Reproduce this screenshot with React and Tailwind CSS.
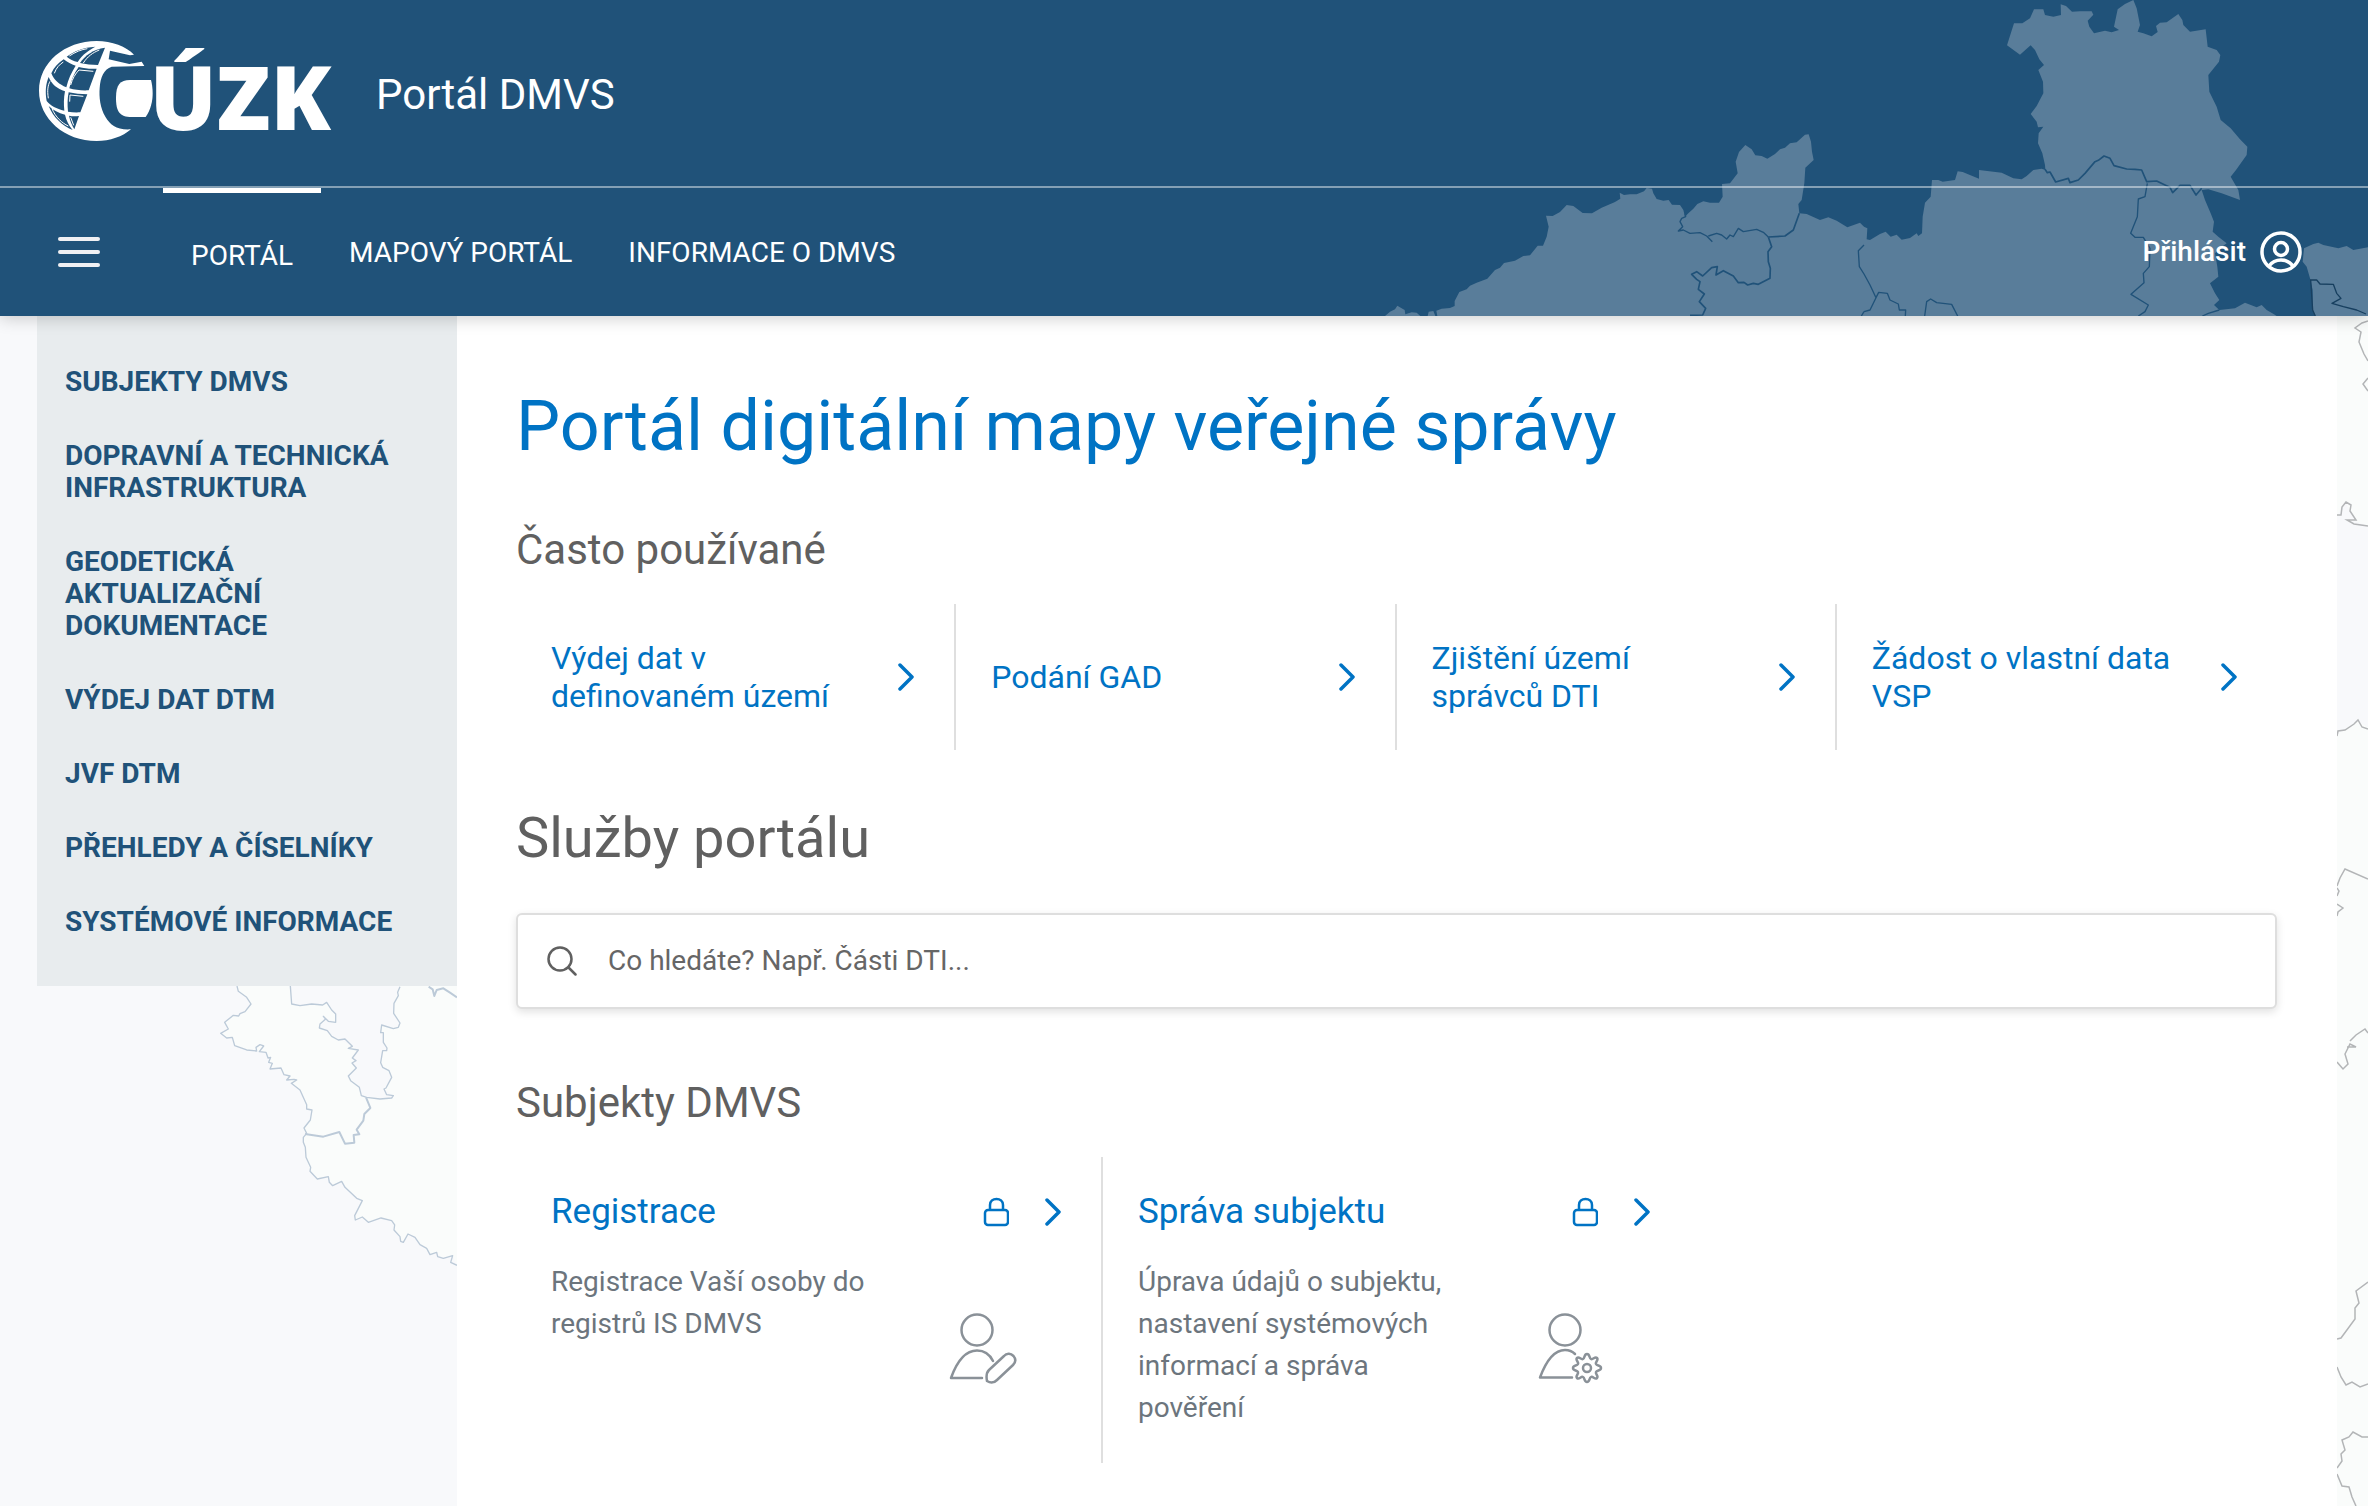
import React, { useState } from 'react';

const MENU = [
  'Subjekty DMVS',
  'Dopravní a technická infrastruktura',
  'Geodetická aktualizační dokumentace',
  'Výdej dat DTM',
  'JVF DTM',
  'Přehledy a číselníky',
  'Systémové informace',
];

const CASTO_POUZIVANE = [
  'Výdej dat v definovaném území',
  'Podání GAD',
  'Zjištění území správců DTI',
  'Žádost o vlastní data VSP',
];

const SLUZBY = [
  { nazev: 'Registrace', popis: 'Registrace Vaší osoby do registrů IS DMVS', Ikona: IkonaOsobaTuzka },
  {
    nazev: 'Správa subjektu',
    popis: 'Úprava údajů o subjektu, nastavení systémových informací a správa pověření',
    Ikona: IkonaOsobaKolecko,
  },
];

function Logo() {
  return (
    <svg viewBox="0 0 930 360" className="w-[310px] h-[120px] shrink-0 overflow-visible" role="img" aria-label="ČÚZK">
      <g fill="#fff">
        <path d="M312 74C290 50 245 33 200 33C104 33 27 98 27 182C27 266 104 333 200 333C240 333 278 320 303 298C262 301 240 285 227 262C210 235 207 200 209 175C211 140 222 118 245 110L343 108L335 95L298 102L236 88L240 62L300 76Z" />
        <path d="M363 150H300C270 150 258 165 258 203C258 243 268 261 305 261H347C362 240 368 215 368 190C368 175 366 162 363 150Z" />
      </g>
      {/* pole zeměkoule mezi poledníky */}
      <g fill="#205279">
        <path d="M110 80C133 63 160 52 196 50C178 60 158 72 143 96C130 93 119 87 110 80Z" />
        <path d="M150 99C165 76 190 58 225 53L204 105C185 105 167 103 150 99Z" />
        <path d="M101 88C112 97 124 103 137 107C124 128 115 147 109 172C88 164 72 150 64 130C72 112 84 99 101 88Z" />
        <path d="M146 111C164 116 181 117 200 116L176 181C155 182 135 180 118 175C123 152 132 131 146 111Z" />
        <path d="M56 141C64 162 82 177 105 184C101 205 101 223 103 242C79 236 62 228 50 213C45 186 47 162 56 141Z" />
        <path d="M116 187C133 191 152 193 172 193L151 247C137 248 125 247 114 245C112 224 112 207 116 187Z" />
        <path d="M56 228C70 241 85 249 105 254C109 271 116 286 128 300C96 287 70 262 56 228Z" />
        <path d="M117 257C126 259 136 259 147 258L133 298C126 286 120 272 117 257Z" />
      </g>
      <g fill="none" stroke="#fff" strokeWidth="3">
        <path d="M118 78C136 66 155 58 172 56M160 99C172 80 188 68 208 60M73 130C79 113 88 104 100 96M122 165C127 146 136 131 147 120L190 124M55 205C51 180 54 165 60 154M119 215L120 195L160 199M66 236C77 262 96 279 115 288M122 262L131 286" />
      </g>
      <text x="359" y="299" fill="#fff" fontFamily="Open Sans, sans-serif" fontWeight="800" fontSize="265">
        ÚZK
      </text>
    </svg>
  );
}

function MapaHlavicka() {
  return (
    <svg viewBox="0 0 3024 948" className="absolute top-0 right-0 w-[1008px] h-[316px]" aria-hidden="true">
      <g fill="#597d9a">
        <path d="M75 948L90 935L105 928L112 917L134 930L136 943L155 937L170 938L181 948ZM203 948L206 935L220 933L226 948Z" />
        <path d="M232 948L229 932L245 926L270 924L284 918L284 903L298 876L320 868L330 857L350 848L382 836L405 810L420 803L432 789L465 782L490 768L510 766L533 737L549 737L560 710L566 680L558 647L578 648L600 636L620 615L640 618L668 639L696 640L725 623L765 606L781 596L779 578L792 585L810 583L830 583L852 574L860 564L876 566L880 580L890 597L910 602L926 600L936 614L960 615L970 630L975 650L985 640L1000 626L1012 612L1030 604L1050 608L1077 608L1088 590L1086 552L1110 550L1133 520L1127 485L1137 456L1156 435L1175 448L1186 466L1205 468L1222 476L1245 462L1260 448L1275 443L1290 430L1310 427L1335 404L1346 403L1353 425L1356 455L1361 480L1336 503L1333 550L1325 600L1315 612L1318 640L1340 642L1380 660L1405 652L1430 662L1462 682L1500 668L1512 680L1522 685L1520 718L1530 720L1560 702L1577 695L1592 710L1610 704L1625 719L1650 714L1670 700L1675 708L1686 700L1688 650L1695 608L1712 590L1716 540L1735 540L1748 545L1785 540L1793 514L1808 516L1857 536L1857 510L1925 518L1960 535L1985 538L2000 528L2020 510L2045 506L2056 510L2055 495L2047 460L2034 430L2036 400L2050 380L2034 382L2030 365L2012 342L2030 318L2050 280L2049 245L2035 210L2052 195L2038 178L2025 150L2012 136L2000 146L1980 164L1941 136L1962 70L1987 70L2010 55L2022 28L2050 28L2055 45L2080 50L2103 45L2102 13L2118 18L2136 35L2160 34L2195 34L2200 44L2183 62L2188 80L2202 100L2235 92L2255 97L2277 90L2262 80L2273 28L2295 12L2320 0L2330 25L2340 75L2333 95L2350 100L2375 109L2393 96L2388 78L2400 68L2420 67L2455 42L2467 60L2470 75L2490 95L2537 88L2543 140L2570 150L2581 165L2577 185L2545 225L2548 275L2570 320L2582 360L2612 385L2640 418L2662 440L2660 465L2628 510L2612 530L2635 570L2640 600L2585 580L2545 568L2525 570L2535 600L2552 640L2562 665L2558 695L2575 710L2600 730L2580 745L2565 760L2572 800L2575 830L2550 850L2565 880L2578 900L2562 915L2578 930L2625 925L2655 908L2690 922L2705 915L2720 930L2742 943L2750 948Z" />
        <path d="M2832 745L2860 732L2875 728L2890 735L2935 745L2960 738L2980 750L3024 742V948H2866L2858 930L2858 870L2850 835L2840 800L2828 785Z" />
      </g>
      <g fill="none" stroke="#205279" strokeWidth="4" strokeLinejoin="round">
        <path d="M975 640L977 650L965 655L960 665L968 680L955 693L970 690L990 700L1020 698L1040 708L1057 725M1045 708L1070 700L1085 705L1100 717L1110 705L1120 710L1135 685L1150 695L1190 688L1210 697L1225 711" />
        <path d="M1225 711L1275 708L1300 690L1318 640M1225 711L1235 740L1224 755L1225 785L1231 805L1230 835L1195 853L1180 850L1163 855L1152 847L1135 848L1120 828L1090 812L1068 825L1072 800L1055 803L1028 828L1010 815L995 823L1010 838L1020 845L1015 868L1033 882L1018 905L1037 925L1028 945L990 946" strokeWidth="5" />
        <path d="M1512 735L1495 752L1498 800L1512 822L1530 855L1548 893L1530 930L1512 935M1548 893L1556 877L1582 880L1590 900L1615 912L1618 930L1637 930L1636 948M1504 948L1512 935" />
        <path d="M1694 948L1700 905L1712 897L1730 908L1775 913L1793 948" />
        <path d="M2055 508L2062 518L2070 516L2087 546L2125 535L2130 548L2155 540L2175 520L2205 485L2215 481L2232 468L2250 475L2262 497L2300 507L2325 508L2345 510L2360 545L2390 543L2415 555L2430 562L2438 578L2460 556L2490 556L2508 585L2525 565" strokeWidth="5" />
        <path d="M2362 550L2355 590L2335 597L2332 650L2312 700L2325 712L2350 712L2370 745L2368 800L2350 820L2352 848L2313 883L2365 915L2355 935L2335 948M2527 948L2545 940L2578 930" />
        <path d="M2850 840L2870 840L2880 852L2920 853L2930 880L2943 895L2916 910L2950 920L2990 930L3018 942M2852 840L2858 930L2866 948" stroke="#173f5f" />
      </g>
    </svg>
  );
}

function MapaVlevo() {
  return (
    <svg viewBox="-459 46 1260 884" className="block w-full" aria-hidden="true">
      <path
        fill="#fafcfb"
        fillRule="evenodd"
        d="M141 46L145 62L170 80L183 100L150 133L130 134L104 155L115 175L92 188L110 202L127 200L134 225L170 238L228 245L240 262L240 295L273 292L282 312L305 335L330 358L350 415L366 418L361 448L342 472L345 490L340 510L348 560L360 602L382 625L415 618L428 645L455 632L465 650L517 690L494 748L517 739L535 755L573 742L610 753L612 778L640 815L654 790L675 800L690 822L720 852L740 848L760 863L788 855L801 884V46ZM301 46L305 100L330 105L400 100L410 95L437 130V155L402 140L388 170L430 197L487 227L505 238L487 262L497 292L475 316L508 350L514 375L570 382L605 382L610 375L582 355L605 320L572 276L578 240L590 235L575 186V163L615 175L630 157L611 128L612 98L628 46Z"
      />
      <g fill="none" stroke="#bccad8" strokeWidth="4" strokeLinejoin="round">
        <path d="M141 46L145 62L170 80L183 100L165 123L150 129L146 136L130 134L104 155L115 175L92 188L110 202L127 200L134 225L170 238L200 241L198 230L210 222L221 226L208 243L228 245L234 262L242 260L236 275L247 278L240 295L273 292L282 312L300 316L290 328L312 326L320 328L304 338L330 358L350 402V415L366 418L361 448L342 472L350 488L340 500V515L346 530L348 560L362 590L360 602L382 625L415 618L418 635L428 645L455 632L465 650L500 683L517 690L494 735L496 748L517 739L535 755L573 742L605 750L614 763L612 778L630 798L632 812L640 815L654 790L675 800L690 822L710 833L720 852L740 845L743 858L760 863L788 855L782 875L801 884" />
        <path d="M301 46L305 100L330 105L365 100L398 103L410 95L425 118L437 130V155L415 152L400 137L407 145L390 160L388 172L412 180L425 197L445 208L465 205L487 227L475 233L505 238L487 262L498 270L486 277L499 292L475 316L482 330L508 350L514 375L530 380L570 385L605 382L610 375L590 372L582 355L588 352L605 320L597 300L578 290L572 276L578 240H590L591 232L580 215V186H572L575 163L610 174L625 170L630 157L611 128L612 98L625 75L623 65L630 48" />
        <path d="M345 490L400 498L448 484L465 519L493 516L491 493L508 491L500 477L520 450L523 430L541 412L528 380" strokeWidth="6" />
        <path d="M716 48L728 56L733 76L740 58L760 53L780 66L801 80" strokeWidth="6" />
      </g>
    </svg>
  );
}

function MapaVpravo() {
  return (
    <svg viewBox="0 0 31 1190" className="block w-full" aria-hidden="true">
      <path fill="#fafcfb" d="M0 0H31V1190H0Z" />
      <path fill="#f8f9fb" d="M0 200L8 186L18 205L31 210V411L20 405L0 418Z" />
      <g fill="none" stroke="#b3b5b7" strokeWidth="1.500">
        <path d="M31 5L25 7L18 12L24 16L22 26L27 38L31 45M31 62L26 68L31 75" />
        <path d="M0 199L4 199L5 191L9 186L14 189L13 195L19 204L10 204L17 208L31 210" />
        <path d="M0 420L1 415L8 414L17 408L21 404L25 411L31 413" />
        <path d="M0 570L3 562L8 553L31 563M0 572L2 575L0 580M0 588L6 592L1 596L0 600" />
        <path d="M0 746L6 753L11 748L8 738L13 728L19 731L10 731M13 725L19 719L28 713L31 717" />
        <path d="M31 966L19 975L22 987L18 992L18 1003L4 1022L0 1023" />
        <path d="M0 1051L4 1061L9 1069L15 1066L23 1071L31 1068" />
        <path d="M0 1152L5 1145L4 1138L8 1134L5 1124L12 1121L16 1116L25 1121L31 1121M0 1158L5 1170L12 1171L15 1181L19 1190" />
      </g>
    </svg>
  );
}

function Sipka() {
  return (
    <svg viewBox="0 0 16 28" className="w-4 h-7 shrink-0" fill="none" stroke="currentColor" strokeWidth="3.500" strokeLinecap="round" strokeLinejoin="round" aria-hidden="true">
      <path d="M2 2L14 14L2 26" />
    </svg>
  );
}

function Zamek() {
  return (
    <svg viewBox="0 0 26 30" className="w-[26px] h-[30px]" fill="none" stroke="currentColor" strokeWidth="2.500" aria-hidden="true">
      <rect x="2" y="13" width="23" height="15" rx="3" />
      <path d="M7 13V8C7 4 10 2 13.500 2C17 2 20 4 20 8V13" />
    </svg>
  );
}

function IkonaOsobaTuzka() {
  return (
    <svg viewBox="0 0 70 74" className="w-[70px] h-[74px]" fill="none" stroke="#8a9198" strokeWidth="2.500" strokeLinecap="round" strokeLinejoin="round" aria-hidden="true">
      <circle cx="28" cy="18" r="15.500" />
      <path d="M33 66H2C7 52 15 38.500 28 38.500C36 38.500 41 43 44 49" />
      <path d="M38 69C37 64 37 61 40 58L55 44C58 40.500 62 41.500 64.500 44C67 47 67 50 64 53L48 68C45 71 41 71 38 69Z" />
    </svg>
  );
}

function IkonaOsobaKolecko() {
  return (
    <svg viewBox="0 0 70 74" className="w-[70px] h-[74px]" fill="none" stroke="#8a9198" strokeWidth="2.500" strokeLinecap="round" strokeLinejoin="round" aria-hidden="true">
      <circle cx="29" cy="18" r="15.500" />
      <path d="M36 65.500H4C9 52 17 38 29 38C33 38 36 39 39 42" />
      <circle cx="51" cy="56" r="4" />
      <path d="M51 42C54 42 53 46 55 47C57 48 59 44 61 46C63 48 59 50 60 52C61 54 65 53 65 56C65 59 61 58 60 60C59 62 63 64 61 66C59 68 57 64 55 65C53 66 54 70 51 70C48 70 49 66 47 65C45 64 43 68 41 66C39 64 43 62 42 60C41 58 37 59 37 56C37 53 41 54 42 52C43 50 39 48 41 46C43 44 45 48 47 47C49 46 48 42 51 42Z" />
    </svg>
  );
}

function Hlavicka() {
  return (
    <header className="relative z-10 bg-[#205279] text-white shadow-[0_2px_16px_rgba(0,0,0,0.2)]">
      <MapaHlavicka />
      <div className="relative flex items-center h-[188px] pl-[30px] pb-[6px] gap-9 border-b-2 border-white/45">
        <Logo />
        <span className="pt-[10px] text-[42px] leading-[50px]">Portál DMVS</span>
      </div>
      <nav className="relative flex items-stretch h-32 pl-[58px] pr-[66px] text-[28px] leading-8">
        <button type="button" aria-label="Menu" className="flex flex-col justify-center gap-[9px] w-[42px] mr-[63px]">
          <span className="h-1 rounded-full bg-[#f0f0f3]" />
          <span className="h-1 rounded-full bg-[#f0f0f3]" />
          <span className="h-1 rounded-full bg-[#f0f0f3]" />
        </button>
        <a href="#portal" className="flex items-center px-7 pt-[2px] border-t-[5px] border-white">PORTÁL</a>
        <a href="#mapa" className="flex items-center px-7 pt-[2px]">MAPOVÝ PORTÁL</a>
        <a href="#informace" className="flex items-center px-7 pt-[2px]">INFORMACE O DMVS</a>
        <a href="#prihlasit" className="flex items-center gap-[14px] ml-auto font-medium">
          Přihlásit
          <svg viewBox="0 0 42 42" className="size-[42px]" fill="none" stroke="currentColor" strokeWidth="3.500" aria-hidden="true">
            <circle cx="21" cy="21" r="19" />
            <circle cx="21" cy="18" r="6.500" />
            <path d="M9 35C15 27 27 27 33 35" />
          </svg>
        </a>
      </nav>
    </header>
  );
}

export default function App() {
  const [hledat, setHledat] = useState('');

  return (
    <div className="min-h-screen flex flex-col bg-[#f8f9fb] font-['Roboto',sans-serif] text-[#606060]">
      <Hlavicka />
      <div className="flex flex-1 pl-[37px]">
        <aside className="w-[420px] shrink-0">
          <nav className="flex flex-col gap-[42px] px-7 pt-[50px] pb-12 bg-[#e8ecee]">
            {MENU.map((polozka) => (
              <a key={polozka} href="#menu" className="uppercase font-bold text-[28px] leading-8 text-[#205279]">
                {polozka}
              </a>
            ))}
          </nav>
          <MapaVlevo />
        </aside>

        <main className="flex-1 bg-white pl-[59px] pr-15 pt-[68px] pb-8">
          <h1 className="text-[70px] leading-[84px] text-[#0073c4]">Portál digitální mapy veřejné správy</h1>

          <h2 className="mt-[57px] text-[42px] leading-[50px]">Často používané</h2>
          <div className="mt-[29px] grid grid-cols-4 divide-x-2 divide-[#dfdfdf]">
            {CASTO_POUZIVANE.map((odkaz) => (
              <a key={odkaz} href="#sluzba" className="flex items-center justify-between gap-4 h-[146px] pl-[35px] pr-10 text-[32px] leading-[38px] text-[#0073c4]">
                <span className="max-w-[300px]">{odkaz}</span>
                <Sipka />
              </a>
            ))}
          </div>

          <h2 className="mt-[54px] text-[56px] leading-[68px]">Služby portálu</h2>
          <label className="mt-[41px] flex items-center gap-[31px] h-24 pl-[29px] pr-7 bg-white border-2 border-[#dedede] rounded-md shadow-[0_3px_8px_rgba(0,0,0,0.12)]">
            <svg viewBox="0 0 30 30" className="size-[30px] shrink-0" fill="none" stroke="#606060" strokeWidth="2.500" strokeLinecap="round" aria-hidden="true">
              <circle cx="13" cy="13" r="11.500" />
              <path d="M21.500 21.500L28.500 28.500" />
            </svg>
            <input
              type="text"
              aria-label="Hledat službu"
              value={hledat}
              onChange={(e) => setHledat(e.target.value)}
              placeholder="Co hledáte? Např. Části DTI..."
              className="flex-1 text-[28px] leading-8 outline-none placeholder:text-[#666]"
            />
          </label>

          <h3 className="mt-[69px] text-[42px] leading-[50px]">Subjekty DMVS</h3>
          <div className="mt-[29px] grid grid-cols-3">
            {SLUZBY.map(({ nazev, popis, Ikona }) => (
              <a key={nazev} href="#sluzba" className="flex flex-col pt-[34px] pb-[34px] pl-[35px] pr-10 border-r-2 border-[#dfdfdf] last:border-r-0">
                <span className="flex items-center text-[#0073c4]">
                  <span className="flex-1 text-[35px] leading-[42px]">{nazev}</span>
                  <Zamek />
                  <span className="flex ml-9">
                    <Sipka />
                  </span>
                </span>
                <span className="mt-7 flex-1 flex items-center text-[28px] leading-[42px] text-[#6c757d]">
                  <span className="w-[328px] mr-[70px] self-start">{popis}</span>
                  <span className="pt-2">
                    <Ikona />
                  </span>
                </span>
              </a>
            ))}
          </div>
        </main>

        <div className="w-[31px] shrink-0">
          <MapaVpravo />
        </div>
      </div>
    </div>
  );
}
